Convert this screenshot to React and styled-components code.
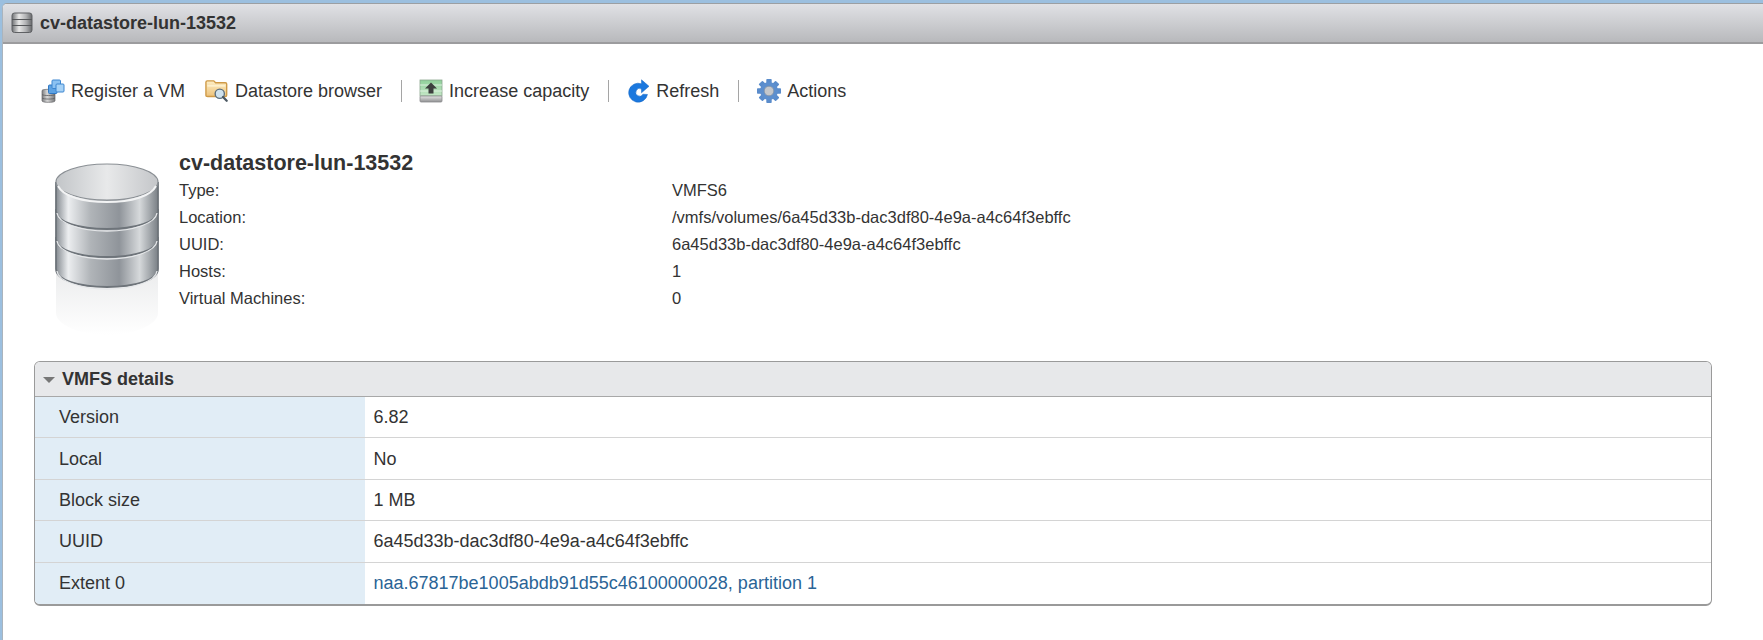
import React from "react";
import styled, { createGlobalStyle } from "styled-components";

const Global = createGlobalStyle`
  html, body { margin: 0; padding: 0; background: #fff; }
  body { font-family: "Liberation Sans", Arial, sans-serif; color: #333; }
`;

const Page = styled.div`
  width: 1763px;
  height: 640px;
  box-sizing: border-box;
  padding: 3px 0 0 2px;
  overflow: hidden;
  background: #9bbfdf;
`;
const Window = styled.div`
  height: 100%;
  box-sizing: border-box;
  border-left: 1px solid #aab4bd;
  border-top: 1px solid #9b9fa3;
  border-top-left-radius: 5px;
  background: #fff;
  overflow: hidden;
`;
const TitleBar = styled.header`
  height: 40px;
  box-sizing: border-box;
  display: flex;
  align-items: center;
  gap: 7px;
  padding-left: 8px;
  background: linear-gradient(#e0e1e5, #b8b9bc);
  border-bottom: 2px solid #9c9c9e;
`;
const TitleText = styled.h1`
  margin: 0;
  font-size: 18px;
  font-weight: 700;
  color: #333;
`;
const Toolbar = styled.nav`
  display: flex;
  align-items: center;
  height: 24px;
  margin-top: 35px;
  padding-left: 38px;
`;
const ToolItem = styled.div`
  display: flex;
  align-items: center;
  gap: 6px;
  margin-right: ${(p) => p.$gap || 0}px;
  font-size: 18px;
  color: #333;
  white-space: nowrap;
`;
const IconSlot = styled.span`
  width: 24px;
  height: 24px;
  display: flex;
  flex: none;
`;
const ToolSep = styled.span`
  width: 1px;
  height: 22px;
  margin: 0 ${(p) => p.$after || 17}px 0 19px;
  background: #a5a5a5;
`;
const Summary = styled.section`
  display: flex;
  margin-top: 48px;
  padding-left: 52px;
  height: 210px;
`;
const BigIcon = styled.div`
  width: 104px;
  flex: none;
  margin-top: 12px;
`;
const SummaryBody = styled.div`
  margin-left: 20px;
`;
const SummaryTitle = styled.h2`
  margin: 0 0 2px;
  font-size: 21.5px;
  line-height: 24px;
  font-weight: 700;
  color: #333;
`;
const SummaryRow = styled.div`
  display: grid;
  grid-template-columns: 493px auto;
  font-size: 16.5px;
  line-height: 27px;
  color: #333;
`;
const Card = styled.section`
  margin: 0 51px 0 31px;
  box-sizing: border-box;
  border: 1px solid #9a9a9a;
  border-bottom-width: 2px;
  border-radius: 6px;
  overflow: hidden;
`;
const CardHeader = styled.div`
  height: 35px;
  box-sizing: border-box;
  display: flex;
  align-items: center;
  gap: 7px;
  padding: 1px 0 0 8px;
  background: #e7e8ea;
  border-bottom: 1px solid #a8a8a8;
  font-size: 18px;
  font-weight: 700;
  color: #333;
`;
const Caret = styled.span`
  width: 0;
  height: 0;
  border-left: 6px solid transparent;
  border-right: 6px solid transparent;
  border-top: 6px solid #777;
`;
const Row = styled.div`
  display: grid;
  grid-template-columns: 330px 1fr;
  height: 41.4px;
  box-sizing: border-box;
  font-size: 18px;
  color: #333;
  border-bottom: ${(p) => (p.$last ? "none" : "1px solid #d4d4d4")};
`;
const Label = styled.div`
  display: flex;
  align-items: center;
  padding: 1px 0 0 24px;
  background: #e1edf6;
`;
const Value = styled.div`
  display: flex;
  align-items: center;
  padding: 1px 0 0 8.5px;
`;
const Link = styled.a`
  color: #2a6496;
  text-decoration: none;
`;

const TitleIcon = () => (
  <svg width="22" height="22" viewBox="0 0 22 22">
    <defs>
      <linearGradient id="ti" x1="0" x2="1" y1="0" y2="0">
        <stop offset="0" stopColor="#6f7174" />
        <stop offset=".35" stopColor="#e8e8e8" />
        <stop offset=".7" stopColor="#b0b1b3" />
        <stop offset="1" stopColor="#66686b" />
      </linearGradient>
    </defs>
    <rect x="1" y="1" width="20" height="19.500" rx="2.500" fill="url(#ti)" stroke="#5f6164" />
    <path d="M1 7.500h20M1 13.500h20" stroke="#55575a" strokeWidth="1.200" />
  </svg>
);

const RegisterIcon = () => (
  <svg width="24" height="24" viewBox="0 0 24 24">
    <defs>
      <linearGradient id="rd" x1="0" x2="1" y1="0" y2="0">
        <stop offset="0" stopColor="#7b7c7e" />
        <stop offset=".4" stopColor="#d8d8d8" />
        <stop offset="1" stopColor="#77787a" />
      </linearGradient>
    </defs>
    <path d="M1 11.500c0-1.600 13-1.600 13 0V22c0 1.800-13 1.800-13 0z" fill="url(#rd)" stroke="#6b6c6e" strokeWidth=".7" />
    <path d="M1 15.500c1 1.400 12 1.400 13 0M1 19c1 1.400 12 1.400 13 0" stroke="#5c5d5f" fill="none" strokeWidth=".8" />
    <rect x="7.500" y="6" width="8.500" height="8.500" rx="1" fill="#5da2e3" stroke="#2f78c4" />
    <rect x="11" y="1" width="8.500" height="8.500" rx="1" fill="#8cc2f2" stroke="#3d86d0" />
    <rect x="15" y="5" width="8" height="8" rx="1" fill="#a7d2f6" stroke="#3d86d0" />
  </svg>
);

const BrowserIcon = () => (
  <svg width="26" height="24" viewBox="0 0 26 24">
    <defs>
      <linearGradient id="bf" x1="0" x2="0" y1="0" y2="1">
        <stop offset="0" stopColor="#fdeec6" />
        <stop offset="1" stopColor="#edc27a" />
      </linearGradient>
    </defs>
    <path d="M1 2.500c0-1 .6-1.500 1.500-1.500h7l2 2h10.500c1 0 1.500.6 1.500 1.500V16.500c0 1-.6 1.500-1.500 1.500h-19C1.600 18 1 17.500 1 16.500z" fill="url(#bf)" stroke="#cf9a47" strokeWidth="1.500" />
    <path d="M2.500 6.500h19.500" stroke="#fff6d8" strokeWidth="1.500" />
    <circle cx="16" cy="15" r="5" fill="#cfe2ee" stroke="#5c6f7f" strokeWidth="1.500" />
    <path d="M19.500 18.500l4 4" stroke="#4b5862" strokeWidth="2.500" strokeLinecap="round" />
  </svg>
);

const IncreaseIcon = () => (
  <svg width="24" height="24" viewBox="0 0 24 24">
    <defs>
      <linearGradient id="ig" x1="0" x2="0" y1="0" y2="1">
        <stop offset="0" stopColor="#8fd09a" />
        <stop offset="1" stopColor="#c4e6c6" />
      </linearGradient>
      <linearGradient id="ib" x1="0" x2="0" y1="0" y2="1">
        <stop offset="0" stopColor="#e4e4e4" />
        <stop offset="1" stopColor="#8f9092" />
      </linearGradient>
    </defs>
    <rect x="1" y="1" width="22" height="16" fill="url(#ig)" stroke="#8aa68e" strokeWidth=".8" />
    <path d="M1 6h22M1 12h22" stroke="#eef8ee" strokeWidth=".8" />
    <rect x="1" y="17" width="22" height="6" rx="1" fill="url(#ib)" stroke="#8b8c8e" strokeWidth=".8" />
    <path d="M12 3.500l-6 6h3.500v5h5v-5H18z" fill="#3c3f3e" />
  </svg>
);

const RefreshIcon = () => (
  <svg width="24" height="24" viewBox="0 0 24 24">
    <path
      d="M21.500 15.500A9.500 9.500 0 1 1 15.500 4.800V0.800l7.500 6.500-7.500 6.500v-3.800a3.800 3.800 0 1 0 1.500 5.200z"
      fill="#1b78de"
      stroke="#1467c4"
      strokeWidth=".5"
    />
  </svg>
);

const GearIcon = () => {
  const teeth = [0, 45, 90, 135, 180, 225, 270, 315];
  return (
    <svg width="24" height="24" viewBox="0 0 24 24">
      {teeth.map((a) => (
        <rect key={a} x="9.300" y="0" width="5.400" height="5" rx=".8" fill="#5a8ccb" transform={`rotate(${a} 12 12)`} />
      ))}
      <circle cx="12" cy="12" r="9" fill="#5d8fce" />
      <circle cx="12" cy="12" r="4.800" fill="#c4c7cb" stroke="#7d8ea3" strokeWidth=".7" />
    </svg>
  );
};

const Band = ({ y, h }) => (
  <>
    <path
      d={`M1 ${y}v${h}c0 11 23 18 51 18s51-7 51-18v-${h}c0 6-23 10-51 10S1 ${y + 6} 1 ${y}z`}
      fill="url(#side)"
      stroke="#6e747a"
      strokeWidth="1.800"
    />
    <path
      d={`M2 ${y + h + 2}c1 10 23 18 50 18s49-8 50-18`}
      fill="none"
      stroke="#e6e8ea"
      strokeWidth="1.300"
    />
  </>
);

const DatastoreIcon = () => (
  <svg width="104" height="176" viewBox="0 0 104 176">
    <defs>
      <linearGradient id="side" x1="0" x2="1" y1="0" y2="0">
        <stop offset="0" stopColor="#858b91" />
        <stop offset=".12" stopColor="#eceef0" />
        <stop offset=".34" stopColor="#b0b4b8" />
        <stop offset=".62" stopColor="#8f949a" />
        <stop offset=".82" stopColor="#d6d9db" />
        <stop offset="1" stopColor="#7a8086" />
      </linearGradient>
      <linearGradient id="top" x1="0" x2="1" y1="0" y2="0">
        <stop offset="0" stopColor="#c2c5c8" />
        <stop offset=".5" stopColor="#e8e9ea" />
        <stop offset="1" stopColor="#c4c6c9" />
      </linearGradient>
      <linearGradient id="refl" x1="0" x2="0" y1="0" y2="1">
        <stop offset="0" stopColor="#e9eaeb" />
        <stop offset="1" stopColor="#ffffff" />
      </linearGradient>
    </defs>
    <path d="M1 100h102v50c0 12-25 22-51 22s-51-10-51-22z" fill="url(#refl)" />
    <Band y={74} h={32} />
    <Band y={46} h={30} />
    <Band y={19} h={29} />
    <ellipse cx="52" cy="19" rx="51" ry="18" fill="url(#top)" stroke="#8a8f94" strokeWidth="1.200" />
    <path d="M3 23c5 10 24 16 49 16s44-6 49-16" fill="none" stroke="#f2f3f4" strokeWidth="2" />
  </svg>
);

const info = [
  ["Type:", "VMFS6"],
  ["Location:", "/vmfs/volumes/6a45d33b-dac3df80-4e9a-a4c64f3ebffc"],
  ["UUID:", "6a45d33b-dac3df80-4e9a-a4c64f3ebffc"],
  ["Hosts:", "1"],
  ["Virtual Machines:", "0"],
];

const rows = [
  ["Version", "6.82"],
  ["Local", "No"],
  ["Block size", "1 MB"],
  ["UUID", "6a45d33b-dac3df80-4e9a-a4c64f3ebffc"],
];

export default function App() {
  return (
    <>
      <Global />
      <Page>
        <Window>
          <TitleBar>
            <TitleIcon />
            <TitleText>cv-datastore-lun-13532</TitleText>
          </TitleBar>
          <Toolbar>
            <ToolItem $gap={20}><IconSlot><RegisterIcon /></IconSlot>Register a VM</ToolItem>
            <ToolItem><IconSlot><BrowserIcon /></IconSlot>Datastore browser</ToolItem>
            <ToolSep />
            <ToolItem><IconSlot><IncreaseIcon /></IconSlot>Increase capacity</ToolItem>
            <ToolSep />
            <ToolItem><IconSlot><RefreshIcon /></IconSlot>Refresh</ToolItem>
            <ToolSep $after={18} />
            <ToolItem><IconSlot><GearIcon /></IconSlot>Actions</ToolItem>
          </Toolbar>
          <Summary>
            <BigIcon><DatastoreIcon /></BigIcon>
            <SummaryBody>
              <SummaryTitle>cv-datastore-lun-13532</SummaryTitle>
              {info.map(([k, v]) => (
                <SummaryRow key={k}><span>{k}</span><span>{v}</span></SummaryRow>
              ))}
            </SummaryBody>
          </Summary>
          <Card>
            <CardHeader><Caret />VMFS details</CardHeader>
            {rows.map(([k, v]) => (
              <Row key={k}><Label>{k}</Label><Value>{v}</Value></Row>
            ))}
            <Row $last>
              <Label>Extent 0</Label>
              <Value><Link href="#">naa.67817be1005abdb91d55c46100000028, partition 1</Link></Value>
            </Row>
          </Card>
        </Window>
      </Page>
    </>
  );
}
